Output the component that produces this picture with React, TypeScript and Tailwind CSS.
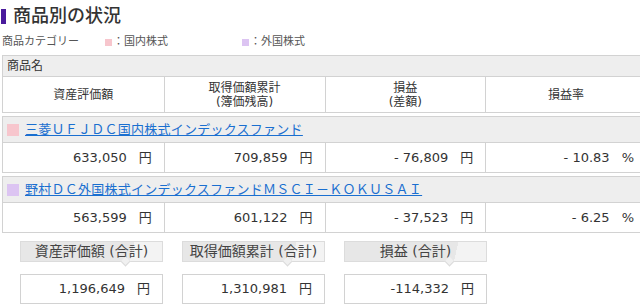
const JP = "font-['Verdana','DejaVu_Sans','Noto_Sans_CJK_JP',sans-serif]";

const FUNDS = [
  {
    name: "三菱ＵＦＪＤＣ国内株式インデックスファンド",
    color: "bg-[#f7c6cd]",
    value: "633,050",
    cost: "709,859",
    gain: "- 76,809",
    rate: "- 10.83",
  },
  {
    name: "野村ＤＣ外国株式インデックスファンドＭＳＣＩ－ＫＯＫＵＳＡＩ",
    color: "bg-[#dcc4f2]",
    value: "563,599",
    cost: "601,122",
    gain: "- 37,523",
    rate: "- 6.25",
  },
];

const TOTALS = [
  { label: "資産評価額 (合計)", value: "1,196,649" },
  { label: "取得価額累計 (合計)", value: "1,310,981" },
  { label: "損益 (合計)", value: "-114,332" },
];

function Amount({ value, unit }: { value: string; unit: string }) {
  return (
    <div className="flex items-center justify-end pr-[12px] h-full">
      <span className="font-['DejaVu_Sans',sans-serif]">{value}</span>
      <span className="ml-[12px]">{unit}</span>
    </div>
  );
}

export default function App() {
  return (
    <div className={`w-[640px] h-[306px] overflow-hidden bg-white text-[#333] ${JP}`}>
      {/* Title */}
      <div className="flex items-center pt-[7px] h-[25px]">
        <div className="ml-[1px] w-[5px] h-[15px] bg-[#4a1b9c]" />
        <h1 className="ml-[7px] text-[18px] leading-none font-medium text-[#333]">商品別の状況</h1>
      </div>

      {/* Category legend */}
      <div className="flex items-center mt-[10px] h-[14px] pl-[2px] text-[11px] text-[#555]">
        <span className="w-[103px]">商品カテゴリー</span>
        <div className="flex items-center w-[137px]">
          <span className="w-[7px] h-[7px] bg-[#f7c6cd]" />
          <span className="ml-[1px]">：国内株式</span>
        </div>
        <div className="flex items-center">
          <span className="w-[7px] h-[7px] bg-[#dcc4f2]" />
          <span className="ml-[1px]">：外国株式</span>
        </div>
      </div>

      {/* Table header */}
      <div className="ml-[2px] mt-[6px] w-[645px] border border-[#d2d2d2] text-[12px]">
        <div className="h-[21px] flex items-center px-[4px] bg-[#eeeeee] border-b border-[#d2d2d2]">
          商品名
        </div>
        <div className="grid grid-cols-4 h-[35px] text-center leading-[14px]">
          <div className="flex items-center justify-center">資産評価額</div>
          <div className="flex flex-col items-center justify-center border-l border-[#d2d2d2]">
            <span>取得価額累計</span>
            <span>(簿価残高)</span>
          </div>
          <div className="flex flex-col items-center justify-center border-l border-[#d2d2d2]">
            <span>損益</span>
            <span>(差額)</span>
          </div>
          <div className="flex items-center justify-center border-l border-[#d2d2d2]">損益率</div>
        </div>
      </div>

      {/* Fund rows */}
      {FUNDS.map((f) => (
        <div key={f.name} className="ml-[2px] mt-[3px] w-[645px] border border-[#d2d2d2]">
          <div className="h-[26px] flex items-center pl-[4px] bg-[#eeeeee] border-b border-[#d2d2d2]">
            <span className={`w-[12px] h-[12px] ${f.color}`} />
            <a href="#" className="ml-[6px] text-[13px] leading-none tracking-[0.25px] text-[#1a6fd0] underline">
              {f.name}
            </a>
          </div>
          <div className="grid grid-cols-4 h-[29px] text-[13px]">
            <Amount value={f.value} unit="円" />
            <div className="border-l border-[#d2d2d2]">
              <Amount value={f.cost} unit="円" />
            </div>
            <div className="border-l border-[#d2d2d2]">
              <Amount value={f.gain} unit="円" />
            </div>
            <div className="border-l border-[#d2d2d2]">
              <Amount value={f.rate} unit="%" />
            </div>
          </div>
        </div>
      ))}

      {/* Totals */}
      <div className="flex gap-[19px] pl-[20px] mt-[8px]">
        {TOTALS.map((t) => (
          <div key={t.label} className="w-[143px]">
            <div className="relative h-[21px] flex items-center justify-center border border-[#dcdcdc] bg-[linear-gradient(103deg,#e7e7e7_78%,#f3f3f3_78%)] text-[14px] text-[#444]">
              {t.label}
              <span className="absolute left-[101px] -bottom-[4px] w-[7px] h-[7px] rotate-45 bg-[#f0f0f0] border-r border-b border-[#dcdcdc]" />
            </div>
            <div className="mt-[12px] h-[30px] border border-[#d2d2d2] text-[13px]">
              <Amount value={t.value} unit="円" />
            </div>
          </div>
        ))}
      </div>
    </div>
  );
}
